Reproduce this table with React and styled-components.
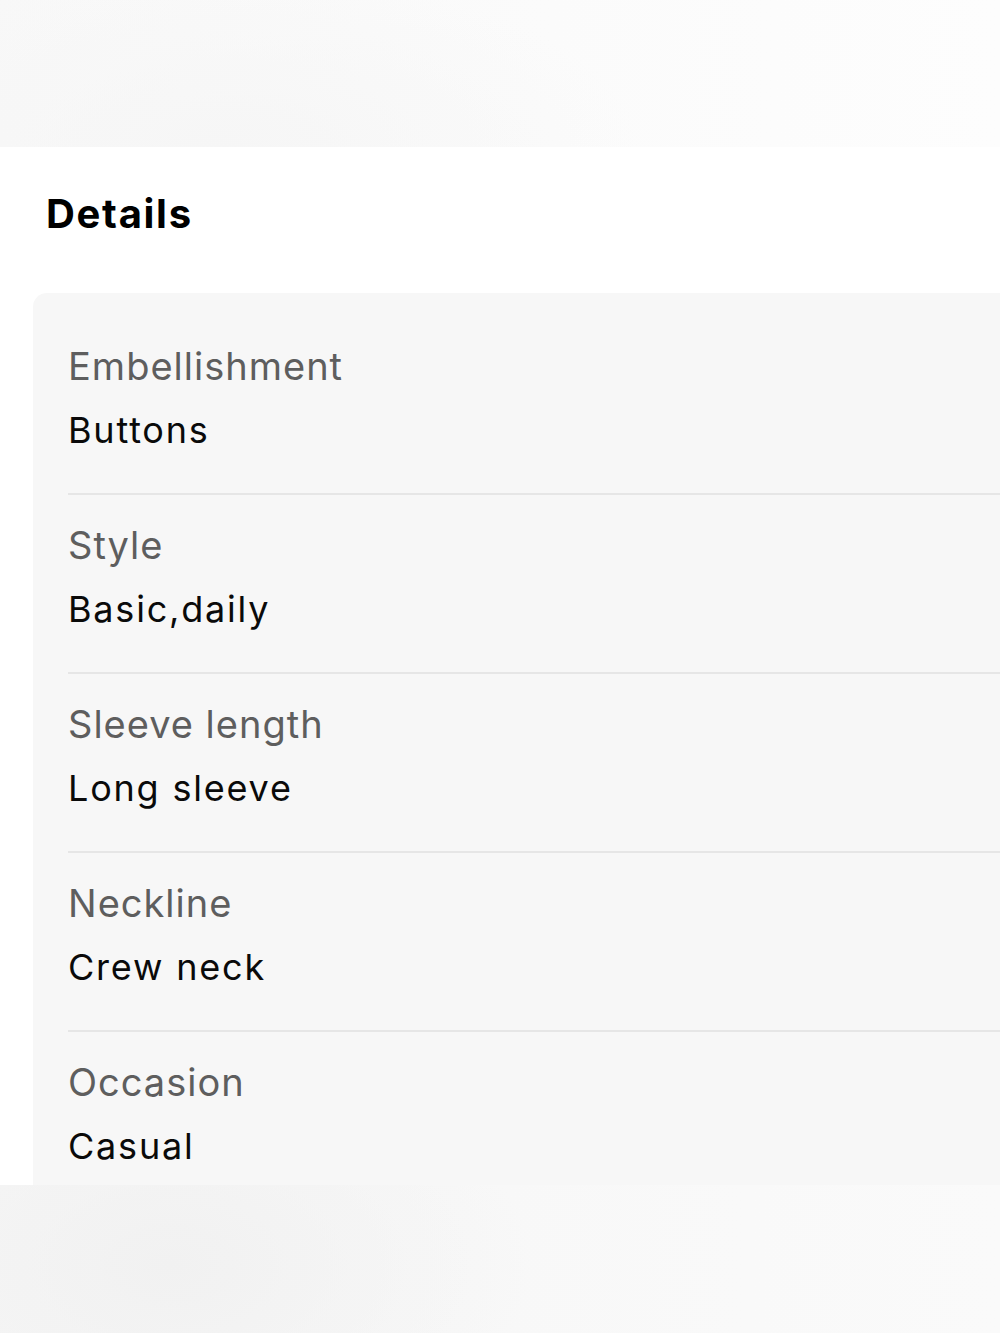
import React from 'react';
import styled, { createGlobalStyle } from 'styled-components';

const GlobalStyle = createGlobalStyle`
  html, body {
    margin: 0;
    padding: 0;
    background: #ffffff;
  }
  body {
    font-family: Inter, "Liberation Sans", Arial, sans-serif;
    -webkit-font-smoothing: antialiased;
  }
`;

const Page = styled.div`
  width: 1000px;
  height: 1333px;
  display: flex;
  flex-direction: column;
  overflow: hidden;
`;

const TopBand = styled.div`
  height: 147px;
  flex-shrink: 0;
  background:
    radial-gradient(ellipse 420px 180px at 220px 150px, #f6f6f6 0%, rgba(246, 246, 246, 0) 100%),
    linear-gradient(90deg, #f8f8f8 0%, #fbfbfb 55%, #fdfdfd 100%);
`;

const Section = styled.section`
  height: 1038px;
  flex-shrink: 0;
  overflow: hidden;
  background: #ffffff;
  padding: 43px 0 0 33px;
  box-sizing: border-box;
`;

const Title = styled.h2`
  margin: 0 0 0 13px;
  font-size: 40px;
  line-height: 48px;
  font-weight: 700;
  letter-spacing: 1.7px;
  color: #000000;
`;

const Card = styled.div`
  margin-top: 55px;
  width: 1000px;
  background: #f7f7f7;
  border-radius: 14px;
  padding: 23px 0 0 35px;
`;

const Row = styled.div`
  padding: 27px 0 41px;
  border-bottom: 2px solid #e6e6e6;

  &:last-child {
    border-bottom: none;
  }
`;

const Label = styled.div`
  font-size: 38px;
  line-height: 46px;
  letter-spacing: 1px;
  color: #5e5e5e;
`;

const Value = styled.div`
  margin-top: 19px;
  font-size: 36px;
  line-height: 44px;
  letter-spacing: 1.8px;
  color: #0a0a0a;
`;

const BottomBand = styled.div`
  height: 148px;
  flex-shrink: 0;
  background:
    radial-gradient(ellipse 360px 220px at 170px 80px, #f1f1f1 0%, rgba(241, 241, 241, 0) 100%),
    linear-gradient(90deg, #f6f6f6 0%, #f8f8f8 50%, #fafafa 100%);
`;

const details = [
  { label: 'Embellishment', value: 'Buttons' },
  { label: 'Style', value: 'Basic,daily' },
  { label: 'Sleeve length', value: 'Long sleeve' },
  { label: 'Neckline', value: 'Crew neck' },
  { label: 'Occasion', value: 'Casual' },
];

export default function App() {
  return (
    <>
      <GlobalStyle />
      <Page>
        <TopBand />
        <Section>
          <Title>Details</Title>
          <Card>
            {details.map((d) => (
              <Row key={d.label}>
                <Label>{d.label}</Label>
                <Value>{d.value}</Value>
              </Row>
            ))}
          </Card>
        </Section>
        <BottomBand />
      </Page>
    </>
  );
}
